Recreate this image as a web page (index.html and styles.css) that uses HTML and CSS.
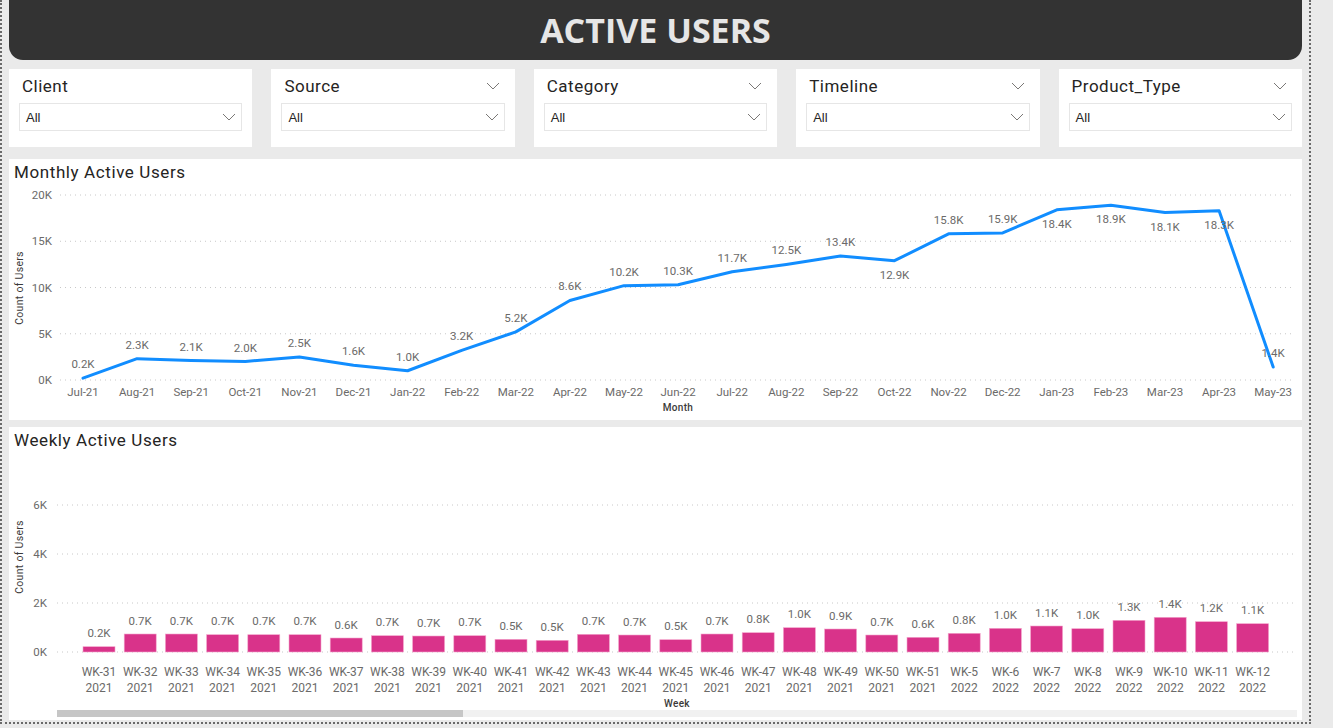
FILE: index.html
```html
<!DOCTYPE html>
<html lang="en">
<head>
<meta charset="utf-8">
<title>Active Users</title>
<link rel="stylesheet" href="styles.css">
</head>
<body>
<div class="canvas">
  <header class="banner"><h1>ACTIVE USERS</h1></header>

  <div class="filters">
    <div class="slicer">
      <div class="slicer-head"><span class="slicer-title">Client</span></div>
      <div class="dropdown"><span>All</span><svg class="chev" width="14" height="8" viewBox="0 0 14 8"><path d="M1 1 L7 7 L13 1"/></svg></div>
    </div>
    <div class="slicer">
      <div class="slicer-head"><span class="slicer-title">Source</span><svg class="chev" width="14" height="8" viewBox="0 0 14 8"><path d="M1 1 L7 7 L13 1"/></svg></div>
      <div class="dropdown"><span>All</span><svg class="chev" width="14" height="8" viewBox="0 0 14 8"><path d="M1 1 L7 7 L13 1"/></svg></div>
    </div>
    <div class="slicer">
      <div class="slicer-head"><span class="slicer-title">Category</span><svg class="chev" width="14" height="8" viewBox="0 0 14 8"><path d="M1 1 L7 7 L13 1"/></svg></div>
      <div class="dropdown"><span>All</span><svg class="chev" width="14" height="8" viewBox="0 0 14 8"><path d="M1 1 L7 7 L13 1"/></svg></div>
    </div>
    <div class="slicer">
      <div class="slicer-head"><span class="slicer-title">Timeline</span><svg class="chev" width="14" height="8" viewBox="0 0 14 8"><path d="M1 1 L7 7 L13 1"/></svg></div>
      <div class="dropdown"><span>All</span><svg class="chev" width="14" height="8" viewBox="0 0 14 8"><path d="M1 1 L7 7 L13 1"/></svg></div>
    </div>
    <div class="slicer">
      <div class="slicer-head"><span class="slicer-title">Product_Type</span><svg class="chev" width="14" height="8" viewBox="0 0 14 8"><path d="M1 1 L7 7 L13 1"/></svg></div>
      <div class="dropdown"><span>All</span><svg class="chev" width="14" height="8" viewBox="0 0 14 8"><path d="M1 1 L7 7 L13 1"/></svg></div>
    </div>
  </div>

  <section class="card line-card">
    <h2 class="card-title">Monthly Active Users</h2>
    <svg class="chart" width="1293" height="237" viewBox="9 183 1293 237">
      <g class="grid">
        <line x1="60" y1="195" x2="1293" y2="195"/>
        <line x1="60" y1="241.25" x2="1293" y2="241.25"/>
        <line x1="60" y1="287.5" x2="1293" y2="287.5"/>
        <line x1="60" y1="333.75" x2="1293" y2="333.75"/>
        <line x1="60" y1="380" x2="1293" y2="380"/>
      </g>
      <g class="tick end">
        <text x="52" y="199">20K</text>
        <text x="52" y="245">15K</text>
        <text x="52" y="291.5">10K</text>
        <text x="52" y="338">5K</text>
        <text x="52" y="384">0K</text>
      </g>
      <text class="ytitle" transform="translate(23 288) rotate(-90)">Count of Users</text>
      <g class="tick mid">
        <text x="83" y="396">Jul-21</text>
        <text x="137.1" y="396">Aug-21</text>
        <text x="191.2" y="396">Sep-21</text>
        <text x="245.3" y="396">Oct-21</text>
        <text x="299.4" y="396">Nov-21</text>
        <text x="353.5" y="396">Dec-21</text>
        <text x="407.6" y="396">Jan-22</text>
        <text x="461.7" y="396">Feb-22</text>
        <text x="515.8" y="396">Mar-22</text>
        <text x="569.9" y="396">Apr-22</text>
        <text x="624" y="396">May-22</text>
        <text x="678.1" y="396">Jun-22</text>
        <text x="732.2" y="396">Jul-22</text>
        <text x="786.3" y="396">Aug-22</text>
        <text x="840.4" y="396">Sep-22</text>
        <text x="894.5" y="396">Oct-22</text>
        <text x="948.6" y="396">Nov-22</text>
        <text x="1002.7" y="396">Dec-22</text>
        <text x="1056.8" y="396">Jan-23</text>
        <text x="1110.9" y="396">Feb-23</text>
        <text x="1165" y="396">Mar-23</text>
        <text x="1219.1" y="396">Apr-23</text>
        <text x="1273.2" y="396">May-23</text>
      </g>
      <text class="xtitle" x="678" y="411">Month</text>
      <polyline class="line" points="83,378.15 137.1,358.7 191.2,360.6 245.3,361.5 299.4,356.9 353.5,365.2 407.6,370.75 461.7,350.4 515.8,331.9 569.9,300.45 624,285.65 678.1,284.7 732.2,271.8 786.3,264.4 840.4,256.05 894.5,260.7 948.6,233.85 1002.7,232.9 1056.8,209.8 1110.9,205.2 1165,212.6 1219.1,210.8 1273.2,367.05"/>
      <g class="dl mid">
        <text x="83" y="368">0.2K</text>
        <text x="137.1" y="349">2.3K</text>
        <text x="191.2" y="351">2.1K</text>
        <text x="245.3" y="352">2.0K</text>
        <text x="299.4" y="347">2.5K</text>
        <text x="353.5" y="355">1.6K</text>
        <text x="407.6" y="361">1.0K</text>
        <text x="461.7" y="340">3.2K</text>
        <text x="515.8" y="322">5.2K</text>
        <text x="569.9" y="290">8.6K</text>
        <text x="624" y="276">10.2K</text>
        <text x="678.1" y="275">10.3K</text>
        <text x="732.2" y="262">11.7K</text>
        <text x="786.3" y="254">12.5K</text>
        <text x="840.4" y="246">13.4K</text>
        <text x="894.5" y="279">12.9K</text>
        <text x="948.6" y="224">15.8K</text>
        <text x="1002.7" y="223">15.9K</text>
        <text x="1056.8" y="228">18.4K</text>
        <text x="1110.9" y="223">18.9K</text>
        <text x="1165" y="231">18.1K</text>
        <text x="1219.1" y="229">18.3K</text>
        <text x="1273.2" y="357">1.4K</text>
      </g>
    </svg>
  </section>

  <section class="card bar-card">
    <h2 class="card-title">Weekly Active Users</h2>
    <svg class="chart" width="1293" height="269" viewBox="9 451 1293 269">
      <g class="grid">
        <line x1="57" y1="505" x2="1297" y2="505"/>
        <line x1="57" y1="554" x2="1297" y2="554"/>
        <line x1="57" y1="603" x2="1297" y2="603"/>
        <line x1="57" y1="652" x2="1297" y2="652"/>
      </g>
      <g class="tick end">
        <text x="47" y="509">6K</text>
        <text x="47" y="558">4K</text>
        <text x="47" y="607">2K</text>
        <text x="47" y="656">0K</text>
      </g>
      <text class="ytitle" transform="translate(23 557) rotate(-90)">Count of Users</text>
      <g class="bars">
        <rect x="83" y="646.7" width="32" height="5.3"/>
        <rect x="124.2" y="634" width="32" height="18"/>
        <rect x="165.4" y="634" width="32" height="18"/>
        <rect x="206.6" y="634.7" width="32" height="17.3"/>
        <rect x="247.8" y="634.7" width="32" height="17.3"/>
        <rect x="289" y="634.7" width="32" height="17.3"/>
        <rect x="330.2" y="638" width="32" height="14"/>
        <rect x="371.4" y="635.7" width="32" height="16.3"/>
        <rect x="412.6" y="636" width="32" height="16"/>
        <rect x="453.8" y="635.7" width="32" height="16.3"/>
        <rect x="495" y="639.3" width="32" height="12.7"/>
        <rect x="536.2" y="640.3" width="32" height="11.7"/>
        <rect x="577.4" y="634.3" width="32" height="17.7"/>
        <rect x="618.6" y="635" width="32" height="17"/>
        <rect x="659.8" y="639.7" width="32" height="12.3"/>
        <rect x="701" y="634" width="32" height="18"/>
        <rect x="742.2" y="632.7" width="32" height="19.3"/>
        <rect x="783.4" y="627.7" width="32" height="24.3"/>
        <rect x="824.6" y="629" width="32" height="23"/>
        <rect x="865.8" y="635" width="32" height="17"/>
        <rect x="907" y="637.3" width="32" height="14.7"/>
        <rect x="948.2" y="633.3" width="32" height="18.7"/>
        <rect x="989.4" y="628.3" width="32" height="23.7"/>
        <rect x="1030.6" y="626" width="32" height="26"/>
        <rect x="1071.8" y="628.7" width="32" height="23.3"/>
        <rect x="1113" y="620.3" width="32" height="31.7"/>
        <rect x="1154.2" y="617.3" width="32" height="34.7"/>
        <rect x="1195.4" y="621.7" width="32" height="30.3"/>
        <rect x="1236.6" y="623.7" width="32" height="28.3"/>
      </g>
      <g class="dl mid">
        <text x="99" y="637">0.2K</text>
        <text x="140.2" y="624.5">0.7K</text>
        <text x="181.4" y="624.5">0.7K</text>
        <text x="222.6" y="625.2">0.7K</text>
        <text x="263.8" y="625.2">0.7K</text>
        <text x="305" y="625.2">0.7K</text>
        <text x="346.2" y="628.5">0.6K</text>
        <text x="387.4" y="626.2">0.7K</text>
        <text x="428.6" y="626.5">0.7K</text>
        <text x="469.8" y="626.2">0.7K</text>
        <text x="511" y="629.8">0.5K</text>
        <text x="552.2" y="630.8">0.5K</text>
        <text x="593.4" y="624.8">0.7K</text>
        <text x="634.6" y="625.5">0.7K</text>
        <text x="675.8" y="630.2">0.5K</text>
        <text x="717" y="624.5">0.7K</text>
        <text x="758.2" y="623.2">0.8K</text>
        <text x="799.4" y="618.2">1.0K</text>
        <text x="840.6" y="619.5">0.9K</text>
        <text x="881.8" y="625.5">0.7K</text>
        <text x="923" y="627.8">0.6K</text>
        <text x="964.2" y="623.8">0.8K</text>
        <text x="1005.4" y="618.8">1.0K</text>
        <text x="1046.6" y="616.5">1.1K</text>
        <text x="1087.8" y="619.2">1.0K</text>
        <text x="1129" y="610.8">1.3K</text>
        <text x="1170.2" y="607.8">1.4K</text>
        <text x="1211.4" y="612.2">1.2K</text>
        <text x="1252.6" y="614.2">1.1K</text>
      </g>
      <g class="wk mid">
        <text x="99" y="676">WK-31<tspan x="99" dy="16">2021</tspan></text>
        <text x="140.2" y="676">WK-32<tspan x="140.2" dy="16">2021</tspan></text>
        <text x="181.4" y="676">WK-33<tspan x="181.4" dy="16">2021</tspan></text>
        <text x="222.6" y="676">WK-34<tspan x="222.6" dy="16">2021</tspan></text>
        <text x="263.8" y="676">WK-35<tspan x="263.8" dy="16">2021</tspan></text>
        <text x="305" y="676">WK-36<tspan x="305" dy="16">2021</tspan></text>
        <text x="346.2" y="676">WK-37<tspan x="346.2" dy="16">2021</tspan></text>
        <text x="387.4" y="676">WK-38<tspan x="387.4" dy="16">2021</tspan></text>
        <text x="428.6" y="676">WK-39<tspan x="428.6" dy="16">2021</tspan></text>
        <text x="469.8" y="676">WK-40<tspan x="469.8" dy="16">2021</tspan></text>
        <text x="511" y="676">WK-41<tspan x="511" dy="16">2021</tspan></text>
        <text x="552.2" y="676">WK-42<tspan x="552.2" dy="16">2021</tspan></text>
        <text x="593.4" y="676">WK-43<tspan x="593.4" dy="16">2021</tspan></text>
        <text x="634.6" y="676">WK-44<tspan x="634.6" dy="16">2021</tspan></text>
        <text x="675.8" y="676">WK-45<tspan x="675.8" dy="16">2021</tspan></text>
        <text x="717" y="676">WK-46<tspan x="717" dy="16">2021</tspan></text>
        <text x="758.2" y="676">WK-47<tspan x="758.2" dy="16">2021</tspan></text>
        <text x="799.4" y="676">WK-48<tspan x="799.4" dy="16">2021</tspan></text>
        <text x="840.6" y="676">WK-49<tspan x="840.6" dy="16">2021</tspan></text>
        <text x="881.8" y="676">WK-50<tspan x="881.8" dy="16">2021</tspan></text>
        <text x="923" y="676">WK-51<tspan x="923" dy="16">2021</tspan></text>
        <text x="964.2" y="676">WK-5<tspan x="964.2" dy="16">2022</tspan></text>
        <text x="1005.4" y="676">WK-6<tspan x="1005.4" dy="16">2022</tspan></text>
        <text x="1046.6" y="676">WK-7<tspan x="1046.6" dy="16">2022</tspan></text>
        <text x="1087.8" y="676">WK-8<tspan x="1087.8" dy="16">2022</tspan></text>
        <text x="1129" y="676">WK-9<tspan x="1129" dy="16">2022</tspan></text>
        <text x="1170.2" y="676">WK-10<tspan x="1170.2" dy="16">2022</tspan></text>
        <text x="1211.4" y="676">WK-11<tspan x="1211.4" dy="16">2022</tspan></text>
        <text x="1252.6" y="676">WK-12<tspan x="1252.6" dy="16">2022</tspan></text>
      </g>
      <text class="xtitle" x="677" y="707">Week</text>
      <rect class="track" x="57" y="710" width="1240" height="7"/>
      <rect class="thumb" x="57" y="710" width="406" height="7"/>
    </svg>
  </section>
</div>
</body>
</html>
```
FILE: styles.css
```css
html, body {
  margin: 0;
  padding: 0;
}
body {
  background: #eaeaea;
  font-family: Roboto, "Liberation Sans", sans-serif;
  color: #252423;
}
.canvas {
  width: 1311px;
  height: 724px;
  box-sizing: border-box;
  border: 2px dotted #6a6a6a;
  border-top: 0;
  padding: 0 7px 2px;
  background: #eaeaea;
}
.banner {
  height: 60px;
  background: #333333;
  border-radius: 0 0 14px 14px;
  display: flex;
  justify-content: center;
}
.banner h1 {
  margin: 0;
  font: 700 34px/60px "Open Sans", sans-serif;
  color: #e6e6e6;
}
.filters {
  display: grid;
  grid-template-columns: repeat(5, 1fr);
  column-gap: 19px;
  margin-top: 9px;
}
.slicer {
  background: #fff;
  height: 78px;
  box-sizing: border-box;
  padding: 6px 10px 16px;
}
.slicer-head {
  display: flex;
  justify-content: space-between;
  align-items: center;
  height: 22px;
  padding: 0 5px 0 3px;
}
.slicer-title {
  font: 400 17px/22px Roboto, sans-serif;
  letter-spacing: 0.5px;
  color: #252423;
}
.chev {
  display: block;
  fill: none;
  stroke: #7a7876;
  stroke-width: 1;
}
.dropdown {
  margin-top: 6px;
  height: 28px;
  box-sizing: border-box;
  border: 1px solid #e6e6e6;
  display: flex;
  align-items: center;
  justify-content: space-between;
  padding: 0 5px 0 6px;
  font: 13px "Liberation Sans", Arial, sans-serif;
  color: #252423;
}
.card {
  background: #fff;
}
.line-card {
  margin-top: 12px;
  height: 261px;
}
.bar-card {
  margin-top: 7px;
  height: 293px;
}
.card-title {
  margin: 0;
  padding: 2px 5px 0;
  font: 400 17px/22px Roboto, sans-serif;
  letter-spacing: 0.6px;
  color: #252423;
}
.chart {
  display: block;
}
.grid line {
  stroke: #c8c8c8;
  stroke-width: 1;
  stroke-dasharray: 1 4;
}
.tick text, .dl text, .wk text {
  font-family: Roboto, sans-serif;
  font-size: 11.5px;
  fill: #6b6a69;
}
.wk text {
  font-size: 12px;
}
.end text {
  text-anchor: end;
}
.mid text {
  text-anchor: middle;
}
.ytitle {
  font: 400 10.5px Roboto, sans-serif;
  letter-spacing: 0.3px;
  fill: #3b3a39;
  text-anchor: middle;
}
.xtitle {
  font: 500 10px Roboto, sans-serif;
  letter-spacing: 0.3px;
  fill: #3b3a39;
  text-anchor: middle;
}
.line {
  fill: none;
  stroke: #118dff;
  stroke-width: 3;
  stroke-linejoin: round;
  stroke-linecap: round;
}
.bars rect {
  fill: #d9338a;
  stroke: #f3a6cc;
  stroke-width: 0.6;
}
.track {
  fill: #f1f1f1;
}
.thumb {
  fill: #c6c6c6;
}
```
